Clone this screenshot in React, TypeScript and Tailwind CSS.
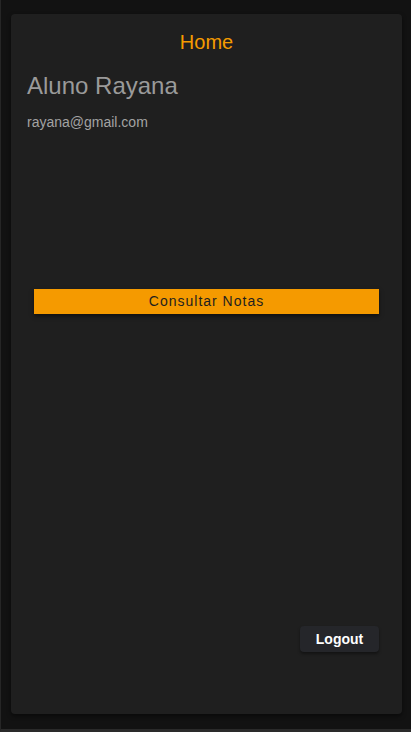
export default function App() {
  return (
    <div className="w-[411px] h-[732px] bg-[#121212] border-l border-b-[3px] border-l-[#262626] border-b-[#2a2a2a] pl-[10px] pr-[9px] pt-[14px] pb-[15px] overflow-hidden" style={{ fontFamily: '"Liberation Sans", Arial, sans-serif' }}>
      <div className="h-[700px] bg-[#1f1f1f] rounded-[4px] px-4 pt-[16px] flex flex-col shadow-[0_2px_4px_rgba(0,0,0,0.5)]">
        <h1 className="text-center text-[20px] leading-[24px] text-[#f59b00]">Home</h1>
        <h2 className="text-[24px] leading-[28px] text-[#9a9a9a] mt-[18px]">Aluno Rayana</h2>
        <p className="text-[14px] leading-[16px] text-[#a3a3a3] mt-[14px]">rayana@gmail.com</p>
        <div className="mt-[159px] px-[7px]">
          <button className="w-full h-[25px] bg-[#f59a00] text-[14px] text-[#1f1f1f] tracking-[1px] shadow-[0_2px_4px_rgba(0,0,0,0.5)]">Consultar Notas</button>
        </div>
        <div className="flex justify-end mt-[312px] pr-[7px]">
          <button className="w-[79px] h-[26px] bg-[#25262a] rounded-[4px] text-white font-bold text-[14px] shadow-[0_2px_3px_rgba(0,0,0,0.4)]">Logout</button>
        </div>
      </div>
    </div>
  );
}
